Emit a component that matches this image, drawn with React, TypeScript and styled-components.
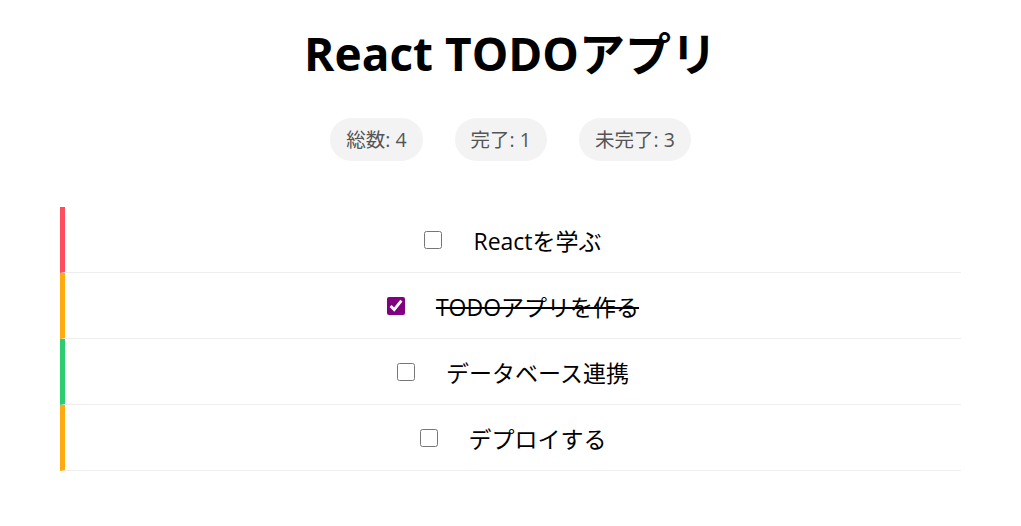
import * as React from 'react'
import styled, { createGlobalStyle } from 'styled-components'

const GlobalStyle = createGlobalStyle`
  body {
    margin: 0;
    background: #fff;
    font-family: "Open Sans", "Noto Sans CJK JP", sans-serif;
    color: #000;
  }
`

const Page = styled.div`
  padding-top: 20px;
  display: flex;
  flex-direction: column;
  align-items: center;
`

const Title = styled.h1`
  margin: 0;
  font-size: 46px;
  font-weight: 700;
  line-height: 66px;
`

const Stats = styled.div`
  display: flex;
  gap: 32px;
  margin-top: 32px;
`

const Badge = styled.span`
  background: #f3f3f3;
  color: #555;
  font-size: 19.5px;
  line-height: 23px;
  padding: 10px 16px;
  border-radius: 22px;
`

const List = styled.ul`
  list-style: none;
  margin: 46px 0 0;
  padding: 0;
  width: 901px;
`

const Item = styled.li<{ $color: string }>`
  display: flex;
  align-items: center;
  justify-content: center;
  gap: 31px;
  height: 65px;
  border-left: 5px solid ${({ $color }) => $color};
  border-bottom: 1px solid #eee;
`

const Check = styled.input`
  width: 18px;
  height: 18px;
  margin: 0;
  accent-color: purple;
`

const Label = styled.span<{ $done: boolean }>`
  font-size: 23px;
  text-decoration: ${({ $done }) => ($done ? 'line-through' : 'none')};
`

const todos = [
  { text: 'Reactを学ぶ', done: false, color: '#ff4d5e' },
  { text: 'TODOアプリを作る', done: true, color: '#ffaa0e' },
  { text: 'データベース連携', done: false, color: '#2ecc71' },
  { text: 'デプロイする', done: false, color: '#ffaa0e' },
]

const App = () => {
  const done = todos.filter(t => t.done).length
  return (
    <Page>
      <GlobalStyle />
      <Title>React TODOアプリ</Title>
      <Stats>
        <Badge>総数: {todos.length}</Badge>
        <Badge>完了: {done}</Badge>
        <Badge>未完了: {todos.length - done}</Badge>
      </Stats>
      <List>
        {todos.map(todo => (
          <Item key={todo.text} $color={todo.color}>
            <Check type="checkbox" defaultChecked={todo.done} />
            <Label $done={todo.done}>{todo.text}</Label>
          </Item>
        ))}
      </List>
    </Page>
  )
}

export default App
